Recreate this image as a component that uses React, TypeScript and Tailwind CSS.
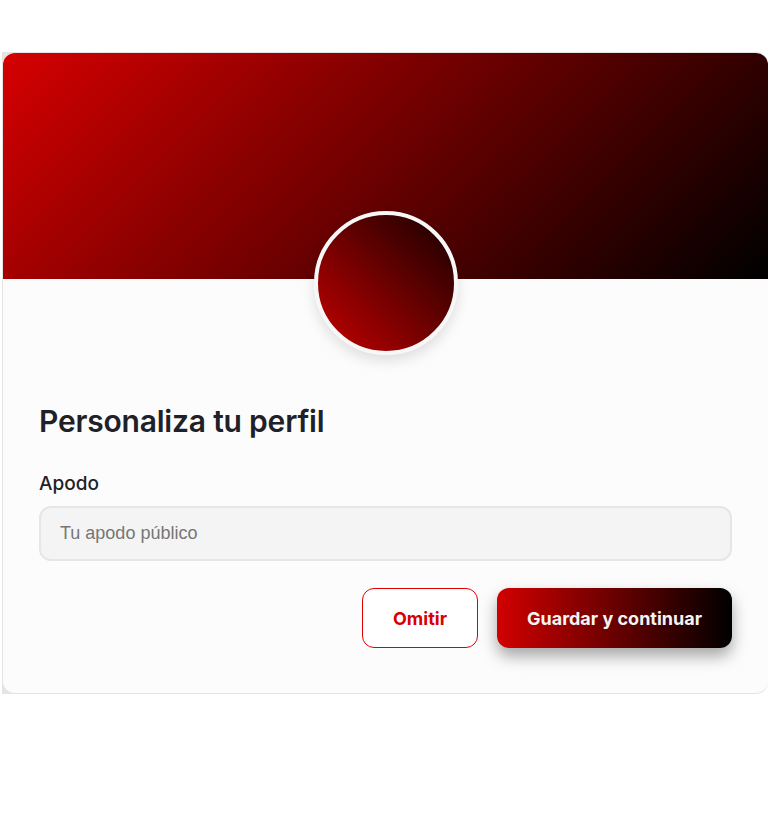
export default function App() {
  return (
    <div className="min-h-[813px] w-[770px] bg-white pt-[52px] pl-[2px]" style={{ fontFamily: "Inter, 'Noto Sans', sans-serif" }}>
      <div className="w-[766px] rounded-tr-xl rounded-br-xl bg-[#e4e4e4] py-px pl-px">
        <div className="relative overflow-hidden rounded-xl bg-[#fcfcfc]">
          <div className="h-[226px] bg-[linear-gradient(135deg,#d60000_0%,#000000_100%)]" />
          <div className="-mt-[68px] flex justify-center">
            <div className="h-[144px] w-[144px] rounded-full border-4 border-[#f7f7f7] bg-[linear-gradient(to_top_right,#c40000,#150000)] shadow-[0_6px_14px_rgba(0,0,0,0.12)]" />
          </div>
          <div className="px-9 pb-[45px] pt-[47px]">
            <h1 className="text-[30px] font-semibold leading-[38px] tracking-[-0.2px] text-[#1e2228]">
              Personaliza tu perfil
            </h1>
            <label className="mt-[32px] block text-[19px] font-medium leading-[24px] text-[#1e2228]">
              Apodo
            </label>
            <input
              placeholder="Tu apodo público"
              className="mt-[10px] block h-[55px] w-full rounded-xl border-2 border-[#e6e6e6] bg-[#f4f4f4] px-[19px] text-[18px] text-[#222] outline-none placeholder:text-[#767676]"
              style={{ fontFamily: "'Liberation Sans', Arial, sans-serif" }}
            />
            <div className="mt-[27px] flex justify-end gap-[19px]">
              <button className="h-[60px] w-[116px] rounded-xl border border-[#e00000] bg-white text-[18px] font-bold text-[#d80000]">
                Omitir
              </button>
              <button className="h-[60px] w-[235px] rounded-xl bg-[linear-gradient(to_right,#d20000,#000000)] text-[18px] font-bold text-[#f4f4f4] shadow-[0_8px_16px_rgba(0,0,0,0.35)]">
                Guardar y continuar
              </button>
            </div>
          </div>
        </div>
      </div>
    </div>
  );
}
